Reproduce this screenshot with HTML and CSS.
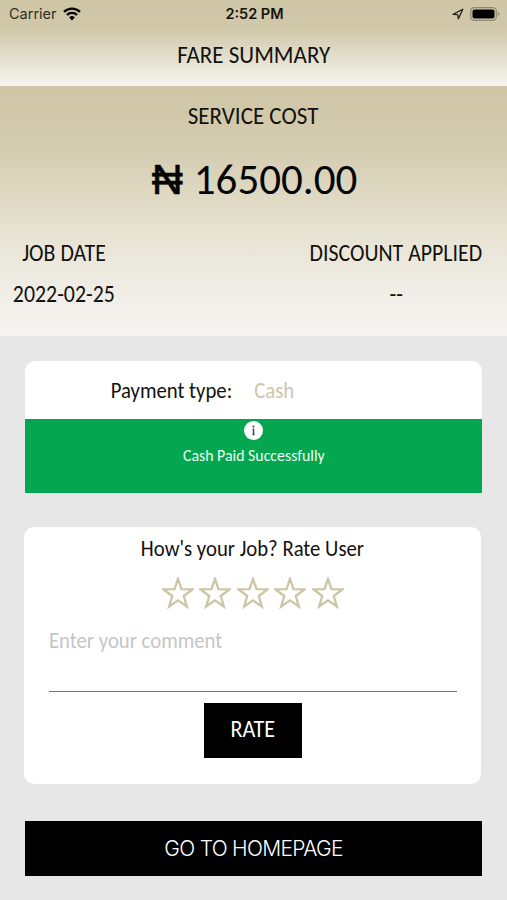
FILE: index.html
```html
<!DOCTYPE html>
<html lang="en">
<head>
<meta charset="utf-8">
<title>Fare Summary</title>
<link rel="stylesheet" href="styles.css">
</head>
<body>
<header class="top">
  <div class="status">
    <div class="status-left"><span>Carrier</span>
      <svg class="wifi" viewBox="0 0 18 14"><path d="M1 4.8a11.6 11.6 0 0 1 16 0M3.9 8a7.2 7.2 0 0 1 10.2 0" fill="none" stroke="#000" stroke-width="2.3"/><path d="M6.2 10.4a4 4 0 0 1 5.6 0L9 13.4z"/></svg>
    </div>
    <div class="status-time">2:52 PM</div>
    <div class="status-right">
      <svg class="loc" viewBox="0 0 12 12"><path d="M1 6.4 10.8 1.2 6.4 10.8 5.7 6.7z" fill="none" stroke="#29261c" stroke-width="1.3" stroke-linejoin="round"/></svg>
      <svg class="battery" viewBox="0 0 30 14"><rect x=".7" y=".7" width="25.6" height="12.6" rx="3.6" fill="none" stroke="#8d8870" stroke-width="1.2"/><rect x="2.5" y="2.5" width="22" height="9" rx="2"/><path d="M27.8 4.8c2.2.9 2.2 3.5 0 4.4z" fill="#8d8870"/></svg>
    </div>
  </div>
  <h1 class="title"><span class="t t-title">FARE SUMMARY</span></h1>
</header>
<section class="cost">
  <h2 class="cost-label"><span class="t t-title">SERVICE COST</span></h2>
  <div class="amount"><span class="naira">₦</span><span class="t">16500.00</span></div>
  <div class="facts">
    <div class="fact"><span class="t">JOB DATE</span><span class="t">2022-02-25</span></div>
    <div class="fact fact-end"><span class="t">DISCOUNT APPLIED</span><span class="t">--</span></div>
  </div>
</section>
<main class="content">
  <section class="payment">
    <div class="pay-row"><span class="t t-pay">Payment type:</span><span class="t t-cash">Cash</span></div>
    <div class="paid">
      <svg class="info" viewBox="0 0 18 18"><circle cx="9" cy="9" r="9" fill="#fff"/><path d="M9 7.2V13.2M8.1 7.7H9.4M8 12.9H10" fill="none" stroke="#454545" stroke-width="1.4"/><circle cx="9" cy="5.2" r="1" fill="#454545"/></svg>
      <span class="t">Cash Paid Successfully</span>
    </div>
  </section>
  <section class="rating">
    <h3 class="ask"><span class="t">How's your Job? Rate User</span></h3>
    <div class="stars">
      <svg class="star" viewBox="1 1 30 30"><path d="M16 2.8 19.3 12.4 29.5 12.6 21.4 18.8 24.3 28.7 16 22.9 7.7 28.7 10.6 18.8 2.5 12.6 12.7 12.4z"/></svg>
      <svg class="star" viewBox="1 1 30 30"><path d="M16 2.8 19.3 12.4 29.5 12.6 21.4 18.8 24.3 28.7 16 22.9 7.7 28.7 10.6 18.8 2.5 12.6 12.7 12.4z"/></svg>
      <svg class="star" viewBox="1 1 30 30"><path d="M16 2.8 19.3 12.4 29.5 12.6 21.4 18.8 24.3 28.7 16 22.9 7.7 28.7 10.6 18.8 2.5 12.6 12.7 12.4z"/></svg>
      <svg class="star" viewBox="1 1 30 30"><path d="M16 2.8 19.3 12.4 29.5 12.6 21.4 18.8 24.3 28.7 16 22.9 7.7 28.7 10.6 18.8 2.5 12.6 12.7 12.4z"/></svg>
      <svg class="star" viewBox="1 1 30 30"><path d="M16 2.8 19.3 12.4 29.5 12.6 21.4 18.8 24.3 28.7 16 22.9 7.7 28.7 10.6 18.8 2.5 12.6 12.7 12.4z"/></svg>
    </div>
    <div class="comment"><span class="t">Enter your comment</span></div>
    <button class="rate"><span class="t">RATE</span></button>
  </section>
  <button class="home">GO TO HOMEPAGE</button>
</main>
</body>
</html>
```

FILE: styles.css
```css
* { box-sizing: border-box; }
body { margin: 0; width: 507px; height: 900px; overflow: hidden; background: #e7e7e7; color: #12110d; font: 400 22px/26px Carlito, Lato, sans-serif; }
h1, h2, h3 { margin: 0; font: inherit; }
svg { display: block; }
button { display: block; border: 0; padding: 0; border-radius: 0; background: #000; color: #fff; font: inherit; }
.t { display: inline-block; white-space: nowrap; transform: scaleX(.942); }

.top { height: 86px; background: linear-gradient(#cfc6a6 0, #d0c8a9 28px, #f4f2ec 82px, #f4f2ee 100%); }
.status { display: grid; grid-template-columns: 1fr auto 1fr; height: 28px; padding: 0 7px 0 9px; align-items: center; font: 400 14.5px/28px Inter, sans-serif; }
.status-left, .status-right { display: flex; align-items: center; }
.status-left { gap: 6px; color: #302d24; }
.status-right { justify-content: flex-end; gap: 6px; }
.status-time { font-weight: 600; }
.wifi { width: 18px; height: 14px; }
.loc { width: 12px; height: 12px; }
.battery { width: 30px; height: 14px; }
.title { padding-top: 14px; text-align: center; }
.t-title { font-size: 24px; transform: scaleX(.96); }

.cost { height: 250px; padding-top: 17px; background: linear-gradient(#cfc6a6, #d4ccb0 25%, #e8e4d4 60%, #f0ede7 82%, #f5f4f0); }
.cost-label { text-align: center; }
.amount { display: flex; justify-content: center; gap: 11px; height: 50px; margin-top: 25px; padding-left: 2px; font-size: 43px; line-height: 50px; color: #050505; }
.amount .t { transform: none; }
.naira { font: 43px/48px "Liberation Sans", sans-serif; -webkit-text-stroke: .6px #050505; }
.facts { display: flex; justify-content: space-between; padding: 35px 22px 0 9px; font-size: 23.5px; }
.facts .t { transform: scaleX(.93); }
.fact { display: flex; flex-direction: column; align-items: center; gap: 15px; }
.fact-end { margin-right: -4px; }

.content { padding: 25px 25px 0; }
.payment { height: 132px; border-radius: 10px 10px 0 0; background: #fff; }
.pay-row { display: flex; gap: 17px; height: 58px; padding-top: 17px; padding-left: 82px; }
.t-cash { color: #cdc6a9; }
.paid { display: flex; flex-direction: column; align-items: center; height: 74px; padding-top: 2px; background: #04a650; color: #eafff2; font-size: 16.5px; line-height: 20px; }
.paid .t { transform: scaleX(.96); }
.info { width: 19px; height: 19px; margin-bottom: 5px; }
.rating { width: 457px; height: 257px; margin: 34px 0 0 -1px; padding-top: 9px; border-radius: 10px; background: #fff; }
.ask { text-align: center; }
.stars { display: flex; justify-content: center; gap: 5.5px; margin-top: 15px; }
.star { width: 32px; height: 32px; fill: none; stroke: #cdc6a6; stroke-width: 2.2; }
.comment { height: 64px; margin: 19px 24px 0 25px; border-bottom: 1px solid #747474; color: #c5c5c5; }
.comment .t { display: block; transform-origin: left; }
.rate { width: 98px; height: 55px; margin: 11px auto 0 180px; padding-bottom: 3px; font-size: 23.5px; }
.home { width: 457px; height: 55px; margin-top: 37px; font: 350 21px/55px Inter, sans-serif; letter-spacing: -.7px; }
```
